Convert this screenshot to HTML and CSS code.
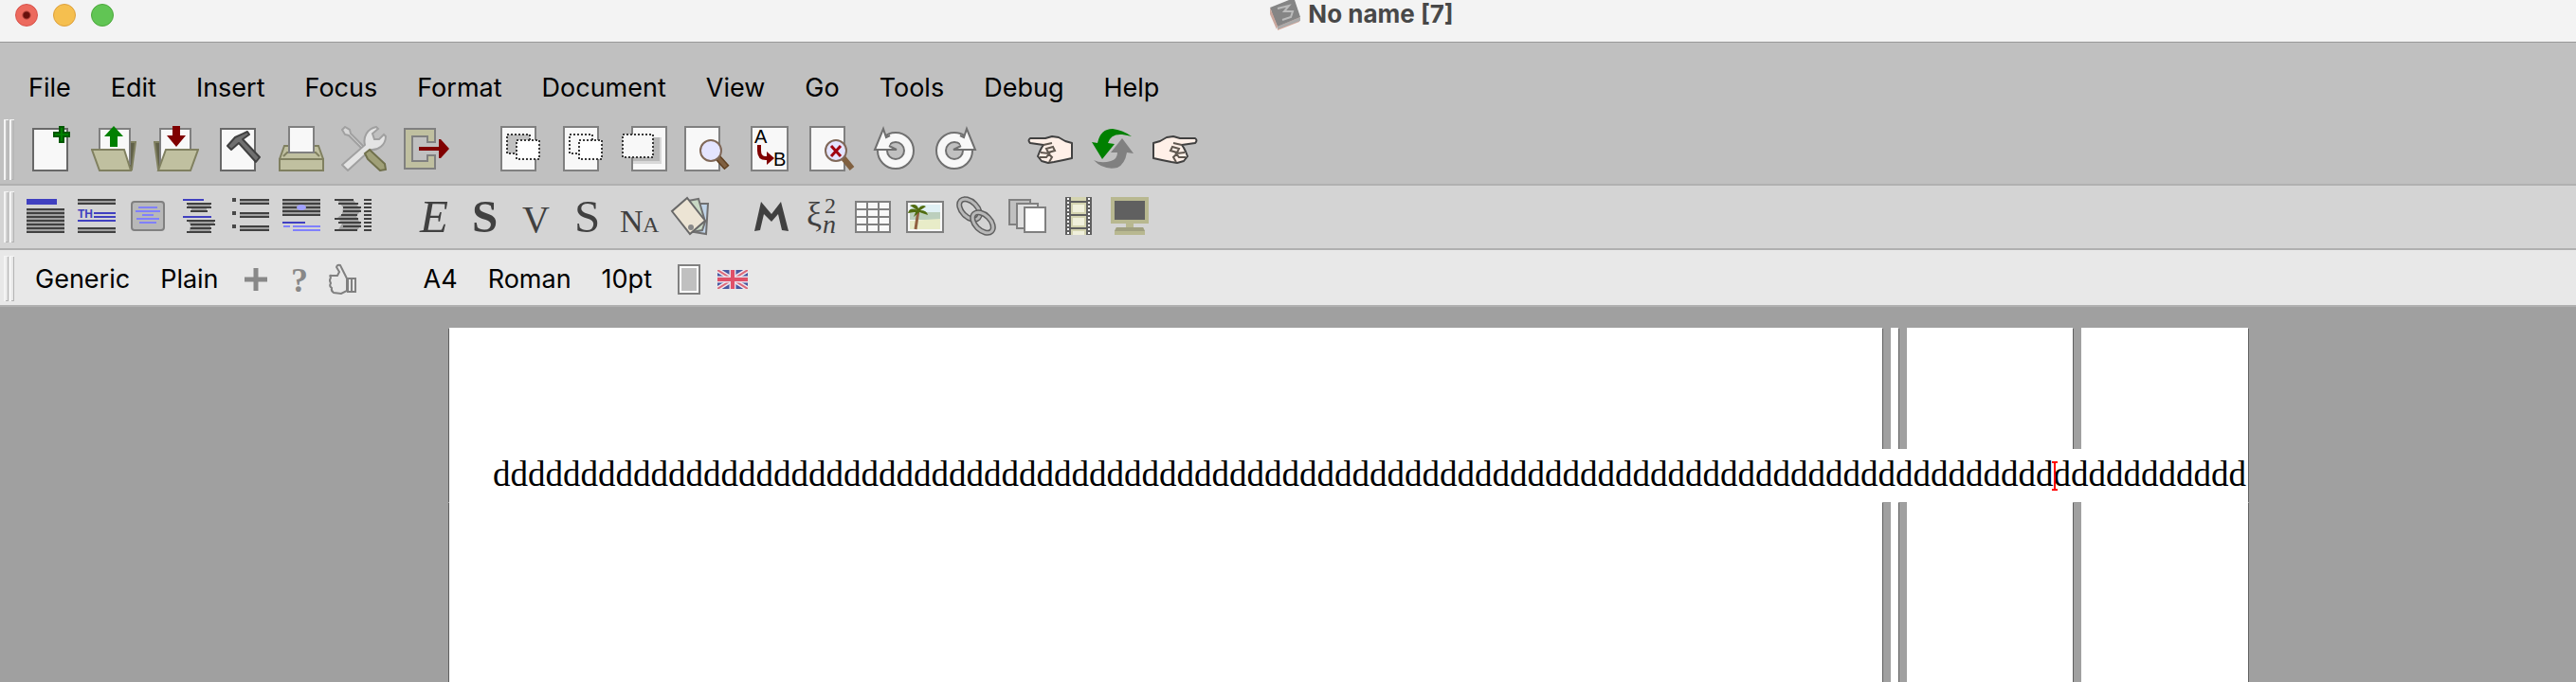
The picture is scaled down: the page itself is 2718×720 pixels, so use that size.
FILE: index.html
```
<!DOCTYPE html>
<html lang="en">
  <head>
    <meta charset="UTF-8" />
    <meta name="viewport" content="width=device-width, initial-scale=1.0" />
    <title>No name [7]</title>
    <link rel="stylesheet" href="styles.css">
  </head>
  <body>
    <header class="titlebar">
      <div class="lights">
        <button class="light close" aria-label="Close"></button>
        <button class="light minimize" aria-label="Minimize"></button>
        <button class="light zoom" aria-label="Zoom"></button>
      </div>
      <h1 class="title">
        <svg width="32" height="32" viewBox="0 0 32 32">
          <path d="M0 12L8 28V32L31 23V18Z" fill="#d9a596" />
          <path d="M0 8L20 0H26L32 18L8 28Z" fill="#858585" />
          <path d="M0 8L8 28L7 31L0 15Z" fill="#c9a69c" />
          <path d="M8 28L32 18V22L8 31Z" fill="#aaa" />
          <path d="M8 9L20 6L15 12L24 12L22 18L13 21" fill="none" stroke="#bbb" stroke-width="2" />
        </svg>
        <span>No name [7]</span>
      </h1>
    </header>

    <div class="top">
      <nav class="menubar">
        <button>File</button>
        <button>Edit</button>
        <button>Insert</button>
        <button>Focus</button>
        <button>Format</button>
        <button>Document</button>
        <button>View</button>
        <button>Go</button>
        <button>Tools</button>
        <button>Debug</button>
        <button>Help</button>
      </nav>

      <div class="toolbar main-bar">
        <div class="handle"><i></i><i></i></div>
        <div class="group">
          <button aria-label="New">
            <svg viewBox="0 0 48 48">
              <path d="M5 3H41V47H5Z" fill="#f8f8f8" stroke="#686868" stroke-width="2" />
              <path d="M33 1H37V7H43V11H37V17H33V11H27V7H33Z" fill="#008000" stroke="#005800" stroke-width="2" />
            </svg>
          </button>
          <button aria-label="Open">
            <svg viewBox="0 0 48 48">
              <path d="M36 17H47L43 46H36Z" fill="#606048" stroke="#808060" stroke-width="2" />
              <path d="M9 3H41V40H9Z" fill="#f8f8f8" stroke="#808080" stroke-width="2" />
              <path d="M1 25H35L42 47H9Z" fill="#c0c0a0" stroke="#808060" stroke-width="2" />
              <path d="M24 0L34 11H28V22H20V11H14Z" fill="#008000" />
            </svg>
          </button>
          <button aria-label="Save">
            <svg viewBox="0 0 48 48">
              <path d="M1 17H10V46H5Z" fill="#606048" stroke="#808060" stroke-width="2" />
              <path d="M7 3H39V40L7 42Z" fill="#f8f8f8" stroke="#808080" stroke-width="2" />
              <path d="M47 25H13L5 47H39Z" fill="#c0c0a0" stroke="#808060" stroke-width="2" />
              <path d="M20 0H28V10H34L24 22L14 10H20Z" fill="#800000" />
            </svg>
          </button>
          <button aria-label="Build">
            <svg viewBox="0 0 48 48">
              <path d="M5 3H41V47H5Z" fill="#f8f8f8" stroke="#686868" stroke-width="2" />
              <path d="M12 21L20 12L33 6L35 9L28 14L46 33L42 38L24 18L16 25Z" fill="#707070" stroke="#404040" stroke-width="2" stroke-linejoin="round" />
            </svg>
          </button>
          <button aria-label="Print">
            <svg viewBox="0 0 48 48">
              <path d="M1 35L6 21H42L47 35Z" fill="#c0c0a0" stroke="#808060" stroke-width="2" />
              <path d="M5 32L9 28H39L43 32" fill="none" stroke="#808060" stroke-width="2" />
              <path d="M11 1H37V28H11Z" fill="#f8f8f8" stroke="#808080" stroke-width="2" />
              <path d="M1 35H47V47H1Z" fill="#c0c0a0" stroke="#808060" stroke-width="2" />
            </svg>
          </button>
          <button aria-label="Preferences">
            <svg viewBox="0 0 48 48">
              <path d="M1 4L4 1L9 4L10 8L28 26L26 28L8 10L4 9Z" fill="#d8d8d8" stroke="#a0a0a0" stroke-width="2" />
              <path d="M1 41L25 20C23 12 27 3 37 1L39 3L33 8L35 14L40 14L45 9L47 11C47 20 39 26 31 25L7 47Z" fill="#e4e4e4" stroke="#a0a0a0" stroke-width="2" />
              <path d="M25 29L30 25L46 40L47 46L41 47L28 35Z" fill="#a0a078" stroke="#70704c" stroke-width="2" />
            </svg>
          </button>
          <button aria-label="Exit">
            <svg viewBox="0 0 48 48">
              <path d="M1 3H33V17H25V11H9V37H25V31H33V45H1Z" fill="#c0c0a0" stroke="#808080" stroke-width="2" />
              <path d="M16 22H37V14H39L48 24L39 34H37V26H16Z" fill="#800000" />
            </svg>
          </button>
        </div>
        <div class="group">
          <button aria-label="Cut">
            <svg viewBox="0 0 48 48">
              <path d="M5 1H41V47H5Z" fill="#f8f8f8" stroke="#808080" stroke-width="2" />
              <path d="M11 9H35V29H11Z" fill="#c0c0c0" stroke="#383838" stroke-width="2" stroke-dasharray="2" />
              <path d="M21 15H45V35H21Z" fill="#fff" stroke="#383838" stroke-width="2" stroke-dasharray="2" />
            </svg>
          </button>
          <button aria-label="Copy">
            <svg viewBox="0 0 48 48">
              <path d="M5 1H41V47H5Z" fill="#f8f8f8" stroke="#808080" stroke-width="2" />
              <path d="M11 9H35V29H11Z" fill="none" stroke="#383838" stroke-width="2" stroke-dasharray="2" />
              <path d="M21 15H45V35H21Z" fill="#fff" stroke="#383838" stroke-width="2" stroke-dasharray="2" />
            </svg>
          </button>
          <button aria-label="Paste">
            <svg viewBox="0 0 48 48">
              <path d="M11 1H47V47H11Z" fill="#f8f8f8" stroke="#808080" stroke-width="2" />
              <path d="M12 12H42V40H12Z" fill="#d8d8d8" />
              <path d="M12 12H40V37H12Z" fill="#b8b8b8" />
              <path d="M1 9H33V33H1Z" fill="#f8f8f8" stroke="#383838" stroke-width="2" stroke-dasharray="2" />
            </svg>
          </button>
          <button aria-label="Find">
            <svg viewBox="0 0 48 48">
              <path d="M1 1H37V47H1Z" fill="#f8f8f8" stroke="#808080" stroke-width="2" />
              <path d="M35 33L45 44" stroke="#604020" stroke-width="7" />
              <path d="M36 34L44 43" stroke="#806040" stroke-width="4" />
              <circle cx="28" cy="26" r="11" fill="#e4e4ff" stroke="#806858" stroke-width="2" />
            </svg>
          </button>
          <button aria-label="Replace">
            <svg viewBox="0 0 48 48">
              <path d="M5 1H43V47H5Z" fill="#f8f8f8" stroke="#808080" stroke-width="2" />
              <text x="8" y="18" class="replace-text">A</text>
              <text x="28" y="42" class="replace-text">B</text>
              <path d="M13 20V26Q13 34 20 34H23" fill="none" stroke="#800000" stroke-width="4" />
              <path d="M21 27L29 34L21 41Z" fill="#800000" />
            </svg>
          </button>
          <button aria-label="Spell check">
            <svg viewBox="0 0 48 48">
              <path d="M1 1H37V47H1Z" fill="#f8f8f8" stroke="#808080" stroke-width="2" />
              <path d="M36 34L45 45" stroke="#806040" stroke-width="6" />
              <circle cx="28" cy="26" r="11" fill="#e4e4ff" stroke="#806858" stroke-width="2" />
              <path d="M23 21L33 32M33 21L23 32" stroke="#a00010" stroke-width="3" />
            </svg>
          </button>
          <button aria-label="Undo">
            <svg viewBox="0 0 48 48">
              <circle cx="25" cy="26" r="14" fill="none" stroke="#707070" stroke-width="12" />
              <circle cx="25" cy="26" r="14" fill="none" stroke="#f8f8f8" stroke-width="8" />
              <path d="M12 3L14 10L20 15L18 22L26 25H3Z" fill="#f8f8f8" />
              <path d="M19 10L15 12L12 3L3 25H26L18 21" fill="none" stroke="#707070" stroke-width="2" />
            </svg>
          </button>
          <button aria-label="Redo">
            <svg viewBox="0 0 48 48">
              <circle cx="21" cy="26" r="14" fill="none" stroke="#707070" stroke-width="12" />
              <circle cx="21" cy="26" r="14" fill="none" stroke="#f8f8f8" stroke-width="8" />
              <path d="M34 3L32 10L26 15L28 22L20 25H43Z" fill="#f8f8f8" />
              <path d="M27 10L31 12L34 3L43 25H20L28 21" fill="none" stroke="#707070" stroke-width="2" />
            </svg>
          </button>
        </div>
        <div class="group">
          <button aria-label="Back">
            <svg viewBox="0 0 48 48">
              <path d="M3 13H19L26 11L33 12L40 16L47 18V34L38 36L28 38L22 39L15 37L11 32L13 27L15 23L17 20L3 18Q0 15 3 13Z" fill="#fff0e8" stroke="#404040" stroke-width="2" stroke-linejoin="round" />
              <path d="M17 20L26 18M20 24L27 22L29 26L22 28ZM14 28L23 29L20 33H13M22 29L26 33L23 38" fill="none" stroke="#605850" stroke-width="2" />
            </svg>
          </button>
          <button aria-label="Refresh">
            <svg viewBox="0 0 48 48">
              <path d="M4 36Q12 40 22 37Q29 35 29 28H22L34 13L46 29L39 28Q37 40 29 44Q14 47 4 36Z" fill="#808080" />
              <path d="M44 11Q34 4 24 3Q11 3 8 18L2 17L13 35L26 19L19 18Q22 8 34 9Q40 10 44 11Z" fill="#008000" />
            </svg>
          </button>
          <button aria-label="Forward">
            <svg viewBox="0 0 48 48">
              <path d="M45 13H29L22 11L15 12L8 16L1 18V34L10 36L20 38L26 39L33 37L37 32L35 27L33 23L31 20L45 18Q48 15 45 13Z" fill="#fff0e8" stroke="#404040" stroke-width="2" stroke-linejoin="round" />
              <path d="M31 20L22 18M28 24L21 22L19 26L26 28ZM34 28L25 29L28 33H35M26 29L22 33L25 38" fill="none" stroke="#605850" stroke-width="2" />
            </svg>
          </button>
        </div>
      </div>
    </div>

    <div class="toolbar mode-bar">
      <div class="handle"><i></i><i></i></div>
      <div class="group">
        <button aria-label="Section">
          <svg viewBox="0 0 40 40">
            <path d="M0 2H32V8H0Z" fill="#4040c0" />
            <path d="M0 12H40V38H0Z" fill="#a0a0a0" />
            <path d="M0 13H40M0 17H40M0 21H40M0 25H40M0 29H40M0 33H40M0 37H40" class="ink" />
          </svg>
        </button>
        <button aria-label="Theorem">
          <svg viewBox="0 0 40 40">
            <path d="M0 2H40V8H0ZM0 32H40V38H0Z" fill="#a0a0a0" />
            <path d="M0 3H40M0 7H40M0 33H40M0 37H40" class="ink" />
            <text x="0" y="22" class="th-text">TH</text>
            <path d="M17 17H40M17 21H40M0 25H40" class="blue" />
          </svg>
        </button>
        <button aria-label="Centered block">
          <svg viewBox="0 0 40 40">
            <rect x="3" y="5" width="34" height="30" rx="3" fill="#b8b8b8" stroke="#808080" stroke-width="2" />
            <path d="M10 11H30M7 15H33M14 19H26M8 23H32M11 27H29" class="pale" />
          </svg>
        </button>
        <button aria-label="Program">
          <svg viewBox="0 0 40 40">
            <path d="M8 6H32V12H28V16H12V12H8ZM8 24H36V30H32V38H10V32H12Z" fill="#a0a0a0" />
            <path d="M3 3H25M3 21H33" class="blue" />
            <path d="M7 7H33M7 11H33M11 15H29M7 25H37M11 29H37M11 33H33M7 37H33" class="ink" />
          </svg>
        </button>
        <button aria-label="Itemize">
          <svg viewBox="0 0 40 40">
            <path d="M9 2H40V8H9ZM9 16H40V22H9ZM9 30H40V36H9Z" fill="#a0a0a0" />
            <path d="M1 1H5V5H1ZM1 15H5V19H1ZM1 29H5V33H1Z" fill="#484848" />
            <path d="M9 3H40M9 7H40M9 17H40M9 21H40M9 31H40M9 35H40" class="ink" />
          </svg>
        </button>
        <button aria-label="Footnote">
          <svg viewBox="0 0 40 40">
            <path d="M0 2H40V20H0Z" fill="#a0a0a0" />
            <path d="M0 3H40M0 7H40M0 11H40M0 15H40M0 19H40" class="ink" />
            <ellipse cx="20" cy="11" rx="5" ry="3" fill="#a0a0ff" />
            <path d="M0 27H24" class="blue" />
            <path d="M1 31H8M11 31H40M11 35H40" class="pale" />
          </svg>
        </button>
        <button aria-label="Fold">
          <svg viewBox="0 0 40 40">
            <path d="M3 2H20L29 14L24 20L29 30L24 36H4L9 28L4 22L9 18L10 11Z" fill="#a0a0a0" />
            <path d="M1 3H21M5 7H26M10 11H29M10 15H29M8 19H25M1 23H26M5 27H29M10 31H29M1 35H25" class="ink" />
            <path d="M32 3H40M32 7H40M32 11H40M32 15H40M32 19H40M32 23H40M32 27H40M32 31H40M32 35H40" class="ink" />
          </svg>
        </button>
      </div>
      <div class="group">
        <button aria-label="Emphasize">
          <svg viewBox="0 0 40 40"><text x="5" y="37" class="letter italic">E</text></svg>
        </button>
        <button aria-label="Strong">
          <svg viewBox="0 0 40 40"><text x="6" y="37" class="letter bold">S</text></svg>
        </button>
        <button aria-label="Verbatim">
          <svg viewBox="0 0 40 40"><text x="5" y="37" class="letter narrow">V</text></svg>
        </button>
        <button aria-label="Sample">
          <svg viewBox="0 0 40 40"><text x="6" y="37" class="letter">S</text></svg>
        </button>
        <button aria-label="Name">
          <svg viewBox="0 0 40 40">
            <text x="0" y="37" class="letter name-n">N</text>
            <text x="24" y="37" class="letter name-a">A</text>
          </svg>
        </button>
        <button aria-label="Style">
          <svg viewBox="0 0 40 40">
            <path d="M26 7H39L37 39L18 36Z" fill="#c0d4e8" stroke="#707070" stroke-width="2" />
            <path d="M18 4L29 2L36 26L33 35L22 37Z" fill="#c8d8c4" stroke="#707070" stroke-width="2" />
            <path d="M17 1L1 15L20 39L36 25Z" fill="#ece4d4" stroke="#686868" stroke-width="2" />
            <circle cx="21" cy="32" r="3" fill="#888" />
          </svg>
        </button>
      </div>
      <div class="group">
        <button aria-label="Math">
          <svg viewBox="0 0 40 40"><path d="M2 36L9 5L20 18L30 5L38 36L31 35L27 18L20 26L12 18L8 35Z" fill="#404040" /></svg>
        </button>
        <button aria-label="Index">
          <svg viewBox="0 0 40 40">
            <text x="3" y="30" class="math-xi">ξ</text>
            <text x="22" y="17" class="math-two">2</text>
            <text x="20" y="38" class="math-n">n</text>
          </svg>
        </button>
        <button aria-label="Table">
          <svg viewBox="0 0 40 40">
            <path d="M1 5H37V37H1ZM13 5V37M25 5V37M1 13H37M1 21H37M1 29H37" fill="#f8f8f8" stroke="#808080" stroke-width="2" />
          </svg>
        </button>
        <button aria-label="Image">
          <svg viewBox="0 0 40 40">
            <path d="M1 5H39V37H1Z" fill="#f8f8f8" stroke="#808080" stroke-width="2" />
            <path d="M4 8H36V17H4Z" fill="#e0f0f4" />
            <path d="M4 17L22 16H36V24H4Z" fill="#bccfbd" />
            <path d="M4 25L36 23V34H4Z" fill="#e8ecc8" />
            <path d="M13 14L10 34" stroke="#906040" stroke-width="3" />
            <path d="M2 17Q4 10 12 14Q6 10 4 9Q11 6 13 12Q17 7 21 10L15 14Q22 14 23 19L14 16L8 21L10 16Z" fill="#506c10" />
          </svg>
        </button>
        <button aria-label="Link">
          <svg viewBox="0 0 40 40">
            <g fill="none">
              <ellipse cx="13" cy="13" rx="13" ry="8" transform="rotate(45 13 13)" stroke="#606060" stroke-width="6" />
              <ellipse cx="13" cy="13" rx="13" ry="8" transform="rotate(45 13 13)" stroke="#b8b8b8" stroke-width="3" />
              <ellipse cx="27" cy="27" rx="13" ry="8" transform="rotate(45 27 27)" stroke="#606060" stroke-width="6" />
              <ellipse cx="27" cy="27" rx="13" ry="8" transform="rotate(45 27 27)" stroke="#b8b8b8" stroke-width="3" />
            </g>
          </svg>
        </button>
        <button aria-label="Switch">
          <svg viewBox="0 0 40 40" stroke="#808080" stroke-width="2">
            <path d="M1 3H23V29H1Z" fill="#c0c0c0" />
            <path d="M9 7H31V33H9Z" fill="#e0e0e0" />
            <path d="M17 11H39V37H17Z" fill="#fff" />
          </svg>
        </button>
        <button aria-label="Animation">
          <svg viewBox="0 0 40 40">
            <path d="M6 0H34V40H6Z" fill="#606060" />
            <path d="M12 0H28V4H12ZM12 6H28V18H12ZM12 20H28V32H12ZM12 34H28V40H12Z" fill="#d4d4b0" />
            <path d="M14 8H26V16H14ZM14 22H26V30H14ZM14 36H26V40H14Z" fill="#f0f0dc" />
            <path d="M9 1V40M31 1V40" stroke="#fff" stroke-width="2" stroke-dasharray="2" />
          </svg>
        </button>
        <button aria-label="Presentation">
          <svg viewBox="0 0 40 40">
            <path d="M0 0H40V28H24V32H34L36 36V40H4V36L6 32H16V28H0Z" fill="#b8b890" />
            <path d="M6 32H34L36 36H4Z" fill="#a0a080" />
            <path d="M4 4H36V24H4Z" fill="#606060" />
          </svg>
        </button>
      </div>
    </div>

    <div class="toolbar focus-bar">
      <div class="handle"><i></i><i></i></div>
      <div class="group">
        <div class="labels">
          <button>Generic</button>
          <button>Plain</button>
        </div>
        <div class="icons">
          <button aria-label="Add package">
            <svg viewBox="0 0 32 32"><path d="M4 16H28M16 4V28" stroke="#888" stroke-width="5" /></svg>
          </button>
          <button aria-label="Help">
            <svg viewBox="0 0 32 32"><text x="7" y="29" class="help-mark">?</text></svg>
          </button>
          <button aria-label="Like">
            <svg viewBox="0 0 32 32">
              <path d="M3 14Q1 11 4 12L10 12L12 8L9 3Q10 0 13 1L18 11L20 15V28L14 31L6 30Q3 28 4 25Q1 23 3 20Q1 17 3 14ZM21 15H29V29H21ZM25 16V28" fill="none" stroke="#808080" stroke-width="2" />
            </svg>
          </button>
        </div>
      </div>
      <div class="group">
        <div class="labels">
          <button>A4</button>
          <button>Roman</button>
          <button>10pt</button>
        </div>
        <div class="icons">
          <button aria-label="Page layout">
            <svg viewBox="0 0 32 32">
              <path d="M5 1H27V31H5Z" fill="#fff" stroke="#808080" stroke-width="2" />
              <path d="M8 4H24V28H8Z" fill="#c0c0c0" />
            </svg>
          </button>
          <button aria-label="British English">
            <svg viewBox="0 0 32 32">
              <clipPath id="flag"><path d="M0 6H32V26H0Z" /></clipPath>
              <g clip-path="url(#flag)">
                <path d="M0 6H32V26H0Z" fill="#4858a0" />
                <path d="M0 6L32 26M32 6L0 26" stroke="#f0e8f0" stroke-width="5" />
                <path d="M0 6L32 26M32 6L0 26" stroke="#dc6878" stroke-width="2" />
                <path d="M16 6V26M0 16H32" stroke="#e8dce8" stroke-width="7" />
                <path d="M16 6V26M0 16H32" stroke="#e05068" stroke-width="4" />
              </g>
            </svg>
          </button>
        </div>
      </div>
    </div>

    <main class="canvas">
      <div class="sheets header-space"><i></i><i></i><i></i><i></i></div>
      <div class="line">ddddddddddddddddddddddddddddddddddddddddddddddddddddddddddddddddddddddddddddddddddddddddd<span class="caret"></span>ddddddddddd</div>
      <div class="sheets body-space"><i></i><i></i><i></i><i></i></div>
    </main>
  </body>
</html>
```
FILE: styles.css
```
:root {
  --ui-font: Inter, "Liberation Sans", sans-serif;
  --edge: #b0b0b0;
  --ink: #404040;
}

* {
  box-sizing: border-box;
  margin: 0;
  padding: 0;
}

body {
  display: flex;
  flex-direction: column;
  min-height: 100vh;
  font-family: var(--ui-font);
  font-size: 27px;
  background: #a0a0a0;
  color: #000;
}

button {
  border: 0;
  background: none;
  font: inherit;
  color: inherit;
  white-space: nowrap;
}

svg {
  display: block;
}

/* title bar */
.titlebar {
  display: flex;
  align-items: flex-start;
  height: 45px;
  padding: 0 16px;
  background: #f3f3f3;
  border-bottom: 1px solid #999;
}

.lights {
  display: flex;
  gap: 16px;
  padding-top: 4px;
}

.light {
  width: 24px;
  height: 24px;
  border-radius: 50%;
  border: 1px solid #d85048;
  background: #ec6a5e;
}

.close {
  background: radial-gradient(circle, #68100c 3px, #ec6a5e 5px);
}

.minimize {
  background: #f5bf4f;
  border-color: #dda03c;
}

.zoom {
  background: #61c554;
  border-color: #4ca83c;
}

.title {
  flex: 1;
  display: flex;
  justify-content: center;
  gap: 8px;
  padding-left: 52px;
  font-size: 26px;
  line-height: 30px;
  font-weight: 700;
  color: #484848;
}

/* menus */
.top {
  background: #c0c0c0;
  border-bottom: 2px solid var(--edge);
}

.menubar {
  display: flex;
  gap: 42px;
  padding: 30px 30px 0;
  height: 75px;
  line-height: 36px;
}

.menubar button {
  height: 36px;
}

/* toolbars */
.toolbar {
  display: flex;
  align-items: center;
}

.handle {
  align-self: stretch;
  display: flex;
  gap: 1px;
  margin: 6px 14px 4px 4px;
}

.handle i {
  width: 5px;
  border: solid #f4f4f4;
  border-width: 1px 0 0 2px;
  box-shadow: inset -1px -1px #b4b4b4;
}

.group {
  display: flex;
}

.main-bar {
  height: 74px;
}

.main-bar .handle {
  margin-right: 15px;
}

.main-bar .group {
  gap: 18px;
  margin-right: 50px;
}

.main-bar svg {
  width: 48px;
  height: 48px;
}

.mode-bar {
  height: 68px;
  padding-bottom: 2px;
  background: #d4d4d4;
  border-bottom: 2px solid var(--edge);
}

.mode-bar .handle {
  margin-right: 13px;
}

.mode-bar .group {
  gap: 14px;
  margin-right: 46px;
}

.mode-bar svg {
  width: 40px;
  height: 40px;
  overflow: visible;
}

.focus-bar {
  height: 60px;
  background: #e8e8e8;
  border-bottom: 2px solid var(--edge);
}

.focus-bar .handle {
  margin-right: 22px;
}

.focus-bar .group {
  gap: 23px;
  margin-right: 69px;
}

.labels {
  display: flex;
  gap: 32px;
  height: 40px;
  padding-top: 4px;
  line-height: 36px;
}

.icons {
  display: flex;
  gap: 14px;
  padding-top: 3px;
}

.icons svg {
  width: 32px;
  height: 32px;
  overflow: visible;
}

/* icon parts */
.ink {
  stroke: var(--ink);
  stroke-width: 2;
}

.blue {
  stroke: #4040c0;
  stroke-width: 2;
}

.pale {
  stroke: #8080ff;
  stroke-width: 2;
}

.replace-text {
  font: 20px "Liberation Sans", sans-serif;
}

.th-text {
  font: bold 12px "Liberation Sans", sans-serif;
  fill: #4040c0;
}

.letter {
  font-family: "Liberation Serif", serif;
  font-size: 49px;
  fill: var(--ink);
}

.italic {
  font-style: italic;
}

.bold {
  font-weight: bold;
}

.narrow {
  font-size: 40px;
}

.name-n {
  font-size: 34px;
}

.name-a {
  font-size: 24px;
}

.math-xi,
.math-two,
.math-n {
  font: 36px "Liberation Serif", serif;
  fill: var(--ink);
}

.math-two {
  font-size: 24px;
}

.math-n {
  font-size: 28px;
  font-style: italic;
}

.help-mark {
  font: bold 36px "Liberation Serif", serif;
  fill: #888;
}

/* document */
.canvas {
  flex: 1;
  display: flex;
  flex-direction: column;
  padding: 22px 346px 0 474px;
  overflow: hidden;
}

.sheets {
  display: grid;
  grid-template-columns: 1511fr 8fr 175fr 176fr;
  column-gap: 9px;
  box-shadow: -1px 1px #606060;
}

.sheets i {
  background: #fff;
  box-shadow: 1px 1px #606060;
}

.header-space {
  height: 128px;
}

.body-space {
  flex: 1;
}

.line {
  position: relative;
  height: 56px;
  padding-left: 46px;
  background: #fff;
  box-shadow: -1px 0 #606060, 1px 0 #606060;
  font: 37px/54px "Liberation Serif", serif;
  white-space: nowrap;
}

.caret {
  position: absolute;
  width: 6px;
  height: 31px;
  margin: 13px 0 0 -2px;
  border: solid #f00;
  border-width: 2px 0;
  background: linear-gradient(#f00, #f00) center / 2px 100% no-repeat;
}
```
